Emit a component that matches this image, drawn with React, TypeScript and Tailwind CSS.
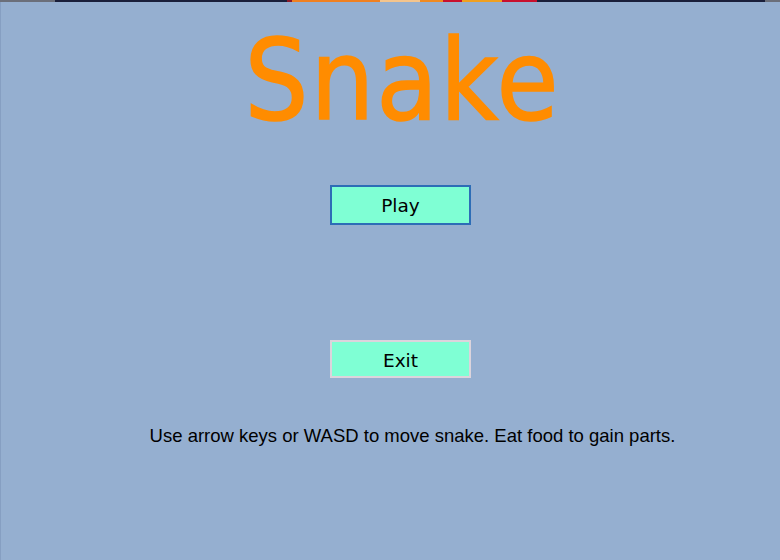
export default function App() {
  return (
    <div className="w-[780px] h-[560px] overflow-hidden bg-[#95afd0] flex flex-col">
      {/* desktop peeking through above the window */}
      <div className="h-[2px] flex shrink-0">
        <div className="w-[55px] bg-[#6b6f7a]" />
        <div className="w-[232px] bg-[#1a1f3a]" />
        <div className="w-[5px] bg-[#8b1a2a]" />
        <div className="w-[88px] bg-[#f08020]" />
        <div className="w-[40px] bg-[#f4c48c]" />
        <div className="w-[23px] bg-[#f08a20]" />
        <div className="w-[19px] bg-[#c8102e]" />
        <div className="w-[40px] bg-[#f0a020]" />
        <div className="w-[35px] bg-[#c8102e]" />
        <div className="w-[228px] bg-[#1a1f3a]" />
        <div className="flex-1 bg-[#6b6f7a]" />
      </div>

      <main className="flex-1 flex flex-col items-center pl-[20px] border-l border-[#869fc2]">
        <h1 className="mt-[22px] h-[112px] ml-[4px] text-[112px] leading-none tracking-[2px] text-[#ff8c00] font-['DejaVu_Sans_Condensed','DejaVu_Sans',sans-serif] [-webkit-text-stroke:1.5px_#ff8c00]">
          Snake
        </h1>

        <button className="mt-[49px] w-[141px] h-[40px] pt-[2px] bg-[#7fffd4] border-2 border-[#2d6db6] flex items-center justify-center text-[18.5px] text-black font-['DejaVu_Sans',sans-serif]">
          Play
        </button>

        <button className="mt-[115px] w-[141px] h-[38px] pt-[3px] bg-[#7fffd4] border-2 border-[#dcd4dc] flex items-center justify-center text-[18.5px] text-black font-['DejaVu_Sans',sans-serif]">
          Exit
        </button>

        <p className="mt-[49px] ml-[24px] text-[18.5px] leading-none text-black whitespace-nowrap font-['Liberation_Sans',Arial,sans-serif]">
          Use arrow keys or WASD to move snake. Eat food to gain parts.
        </p>
      </main>
    </div>
  );
}
